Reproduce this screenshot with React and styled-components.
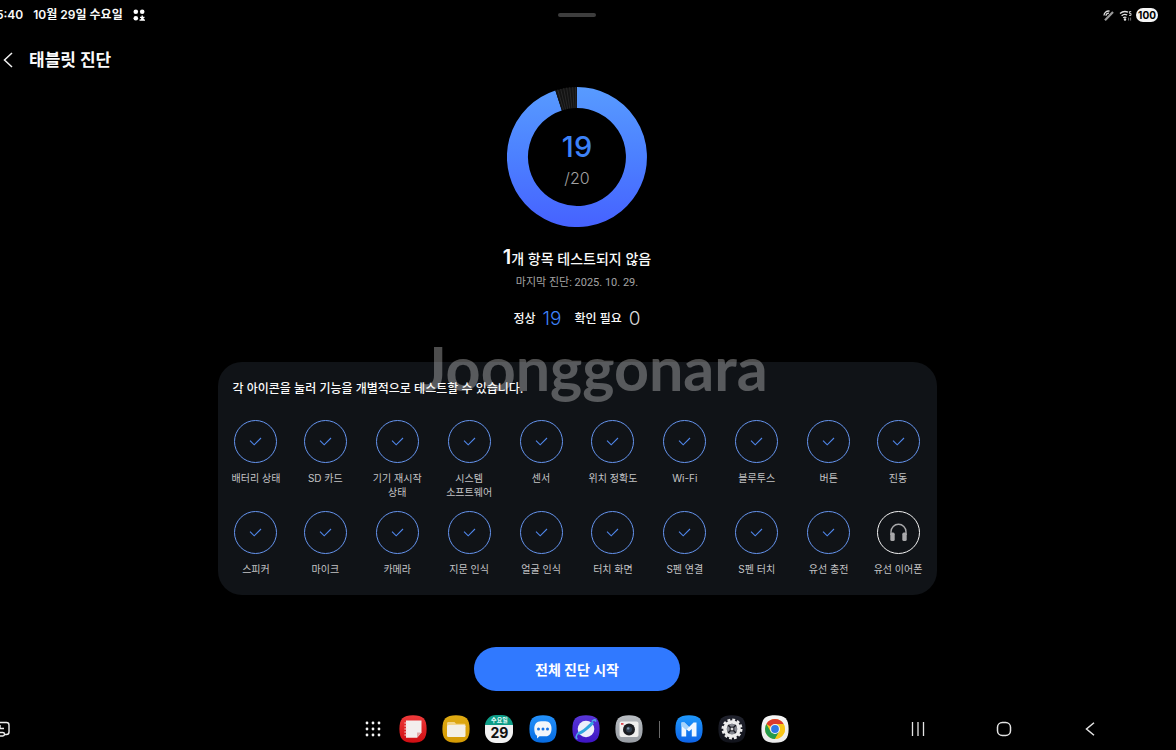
import styled, { createGlobalStyle } from "styled-components";

const GlobalStyle = createGlobalStyle`
  * {
    box-sizing: border-box;
  }
  body {
    margin: 0;
    background: #000;
    color: #fafafa;
    font-family: Inter, "Noto Sans CJK KR", sans-serif;
    overflow: hidden;
  }
  button {
    padding: 0;
    border: 0;
    background: none;
    color: inherit;
    font: inherit;
    cursor: pointer;
  }
  h1, h2, p, ul {
    margin: 0;
    padding: 0;
  }
  svg {
    display: block;
  }
`;

/* the tablet screen runs a little past the left edge of the window */
const Screen = styled.div`
  display: flex;
  flex-direction: column;
  min-height: 100vh;
  margin-left: -22px;
`;

const StatusBar = styled.div`
  display: grid;
  grid-template-columns: 1fr auto 1fr;
  align-items: center;
  height: 30px;
  padding: 0 18px;
  font-size: 12px;
  font-weight: 600;
  line-height: 16px;
`;

const StatusGroup = styled.div`
  display: flex;
  align-items: center;
  justify-content: ${(p) => (p.$end ? "flex-end" : "flex-start")};
  gap: ${(p) => (p.$end ? "4px" : "10px")};
`;

const Handle = styled.div`
  width: 38px;
  height: 4px;
  border-radius: 2px;
  background: #3d3d3d;
`;

const Battery = styled.span`
  border-radius: 7px;
  background: #f5f5f5;
  color: #000;
  font-size: 10px;
  font-weight: 700;
  line-height: 14px;
  width: 22px;
  text-align: center;
`;

const Header = styled.header`
  display: flex;
  align-items: center;
  gap: 15px;
  height: 57px;
  padding: 2px 24px 0;
`;

const Title = styled.h1`
  font-size: 17px;
  font-weight: 700;
  line-height: 24px;
`;

const Main = styled.main`
  display: flex;
  flex: 1;
  flex-direction: column;
  align-items: center;
`;

const RingBox = styled.div`
  display: grid;
  width: 140px;
  height: 140px;

  > * {
    grid-area: 1 / 1;
  }
`;

const RingText = styled.div`
  display: flex;
  flex-direction: column;
  align-items: center;
  padding-top: 44px;
`;

const Passed = styled.strong`
  color: #3d82f8;
  font-size: 29px;
  font-weight: 500;
  line-height: 32px;
`;

const Total = styled.span`
  color: #a0a0a0;
  font-size: 16px;
  font-weight: 300;
  line-height: 30px;
`;

const Summary = styled.h2`
  margin-top: 17px;
  font-size: 14px;
  font-weight: 500;
  line-height: 26px;

  b {
    font-size: 20px;
    font-weight: 600;
  }
`;

const LastRun = styled.p`
  margin-top: 3px;
  color: #a3a3a3;
  font-family: Roboto, "Noto Sans CJK KR", sans-serif;
  font-size: 11px;
  line-height: 16px;
`;

const Counts = styled.div`
  display: flex;
  align-items: center;
  gap: 13px;
  margin-top: 16px;
  font-size: 12px;
  font-weight: 500;
  line-height: 24px;
`;

const Count = styled.span`
  display: flex;
  align-items: center;
  gap: 7px;

  b {
    color: ${(p) => p.$color};
    font-size: 19px;
    font-weight: 300;
  }
`;

const Card = styled.section`
  width: 100%;
  max-width: 719px;
  margin-top: 31px;
  padding: 19px 5px;
  border-radius: 24px;
  background: #101317;
`;

const CardText = styled.p`
  margin: 0 10px 23px;
  font-size: 12px;
  font-weight: 500;
  line-height: 16px;
`;

const TestGrid = styled.ul`
  display: grid;
  grid-template-columns: 67fr repeat(8, 72fr) 67fr;
  row-gap: 12px;
  list-style: none;
`;

const TestItem = styled.li`
  display: flex;
  justify-content: center;
`;

const TestButton = styled.button`
  display: flex;
  flex-direction: column;
  align-items: center;
  gap: 8px;
  color: #c4c4c6;
  font-size: 10px;
  line-height: 14px;
  white-space: pre;
`;

const Circle = styled.span`
  display: grid;
  place-items: center;
  width: 43px;
  height: 43px;
  border: 1px solid ${(p) => (p.$done ? "#6594ee" : "#f2f2f2")};
  border-radius: 50%;
`;

const StartButton = styled.button`
  width: 206px;
  height: 44px;
  margin-top: 52px;
  border-radius: 22px;
  background: #3079ff;
  color: #fff;
  font-size: 14px;
  font-weight: 700;
`;

const Taskbar = styled.nav`
  display: grid;
  grid-template-columns: 1fr 431px 1fr;
  align-items: center;
  height: 42px;
`;

const Dock = styled.div`
  display: flex;
  align-items: center;
  justify-content: space-between;
  padding-right: 3px;
`;

const Divider = styled.span`
  width: 1px;
  height: 17px;
  background: #6a6a6a;
`;

const AppButton = styled.button`
  width: ${(p) => p.$width || "28px"};
  display: grid;
  place-items: center;
`;

const NavKeys = styled.div`
  display: flex;
  justify-content: flex-end;
  padding-right: 43px;
`;

const NavKey = styled.button`
  display: grid;
  place-items: center;
  width: 86px;
  height: 28px;
`;

const EdgeKey = styled.button`
  justify-self: start;
  margin-left: 14px;
`;

const CalendarTile = styled.span`
  display: flex;
  flex-direction: column;
  align-items: center;
  width: 28px;
  height: 28px;
  border-radius: 11px;
  overflow: hidden;
  background: linear-gradient(#0d9d87 10px, #f2f2f2 10px);
  color: #111;
  font-size: 14px;
  font-weight: 700;
  line-height: 16px;

  small {
    color: #e9fffa;
    font-size: 6px;
    line-height: 10px;
  }
`;

const Watermark = styled.div`
  position: fixed;
  inset: 0;
  display: grid;
  place-items: center;
  padding: 0 0 14px 12px;
  color: rgba(255, 255, 255, 0.3);
  font-family: Lato, sans-serif;
  font-size: 61px;
  font-weight: 700;
  line-height: 72px;
  pointer-events: none;
`;

const tests = [
  "배터리 상태",
  "SD 카드",
  "기기 재시작\n상태",
  "시스템\n소프트웨어",
  "센서",
  "위치 정확도",
  "Wi-Fi",
  "블루투스",
  "버튼",
  "진동",
  "스피커",
  "마이크",
  "카메라",
  "지문 인식",
  "얼굴 인식",
  "터치 화면",
  "S펜 연결",
  "S펜 터치",
  "유선 충전",
  "유선 이어폰",
];

function Check() {
  return (
    <svg width="13" height="9" viewBox="0 0 13 9" fill="none" stroke="#4f86ea" strokeWidth="1.1">
      <path d="M1 3.6 5.2 7.8 12 1" />
    </svg>
  );
}

function Headphones() {
  return (
    <svg width="19" height="19" viewBox="0 0 19 19" fill="none">
      <path d="M2 12V8.8a7.5 7.5 0 0 1 15 0V12" stroke="#a9a9ab" strokeWidth="1.4" />
      <rect x="1.3" y="9.6" width="4.4" height="8.4" rx="1.6" fill="#a9a9ab" />
      <rect x="13.3" y="9.6" width="4.4" height="8.4" rx="1.6" fill="#a9a9ab" />
    </svg>
  );
}

function Ring() {
  const ticks = [-16, -13.5, -11, -8.5, -6, -3.5, -1.2];
  return (
    <svg width="140" height="140" viewBox="0 0 140 140" fill="none">
      <defs>
        <linearGradient id="ring" gradientUnits="userSpaceOnUse" x1="0" y1="0" x2="0" y2="140">
          <stop offset="0" stopColor="#589bff" />
          <stop offset="0.5" stopColor="#4c80ff" />
          <stop offset="1" stopColor="#4662ff" />
        </linearGradient>
      </defs>
      <path d="M70 10.5A59.5 59.5 0 1 1 51.6 13.4" stroke="url(#ring)" strokeWidth="21" />
      <path d="M51.6 13.4A59.5 59.5 0 0 1 70 10.5" stroke="#131313" strokeWidth="21" />
      {ticks.map((a) => (
        <path key={a} d="M70 0V21" stroke="#2b2b2b" strokeWidth="0.8" transform={`rotate(${a} 70 70)`} />
      ))}
    </svg>
  );
}

function Tile({ id, from, to, children }) {
  return (
    <svg width="28" height="28" viewBox="0 0 28 28">
      <defs>
        <linearGradient id={id} x1="0" y1="0" x2="0" y2="1">
          <stop offset="0" stopColor={from} />
          <stop offset="1" stopColor={to} />
        </linearGradient>
      </defs>
      <path
        d="M14 .3C24 .3 27.6 4 27.6 14S24 27.7 14 27.7.4 24 .4 14 4 .3 14 .3Z"
        fill={`url(#${id})`}
      />
      {children}
    </svg>
  );
}

function StatusIcons() {
  return (
    <>
      <svg width="13" height="13" viewBox="0 0 13 13" fill="none" stroke="#ddd">
        <path d="M2 6.5a4.600 4.600 0 0 1 5.600-4.400M4 6.800a2.700 2.700 0 0 1 3-2.600" strokeWidth="1.3" />
        <path d="M3 11.200 11 3" stroke="#999" strokeWidth="2.2" />
      </svg>
      <svg width="13" height="13" viewBox="0 0 13 13" fill="none" stroke="#e4e4e4" strokeWidth="1.3">
        <path d="M1 4.600a7.500 7.500 0 0 1 8-1.400M2.600 6.800a5 5 0 0 1 5.600-.8M4.200 8.800a2.800 2.800 0 0 1 3.200-.3" />
        <circle cx="6" cy="10.4" r=".6" fill="#ddd" />
        <path d="M12.200 2.600h-1.800v1.800h1.600v2H10" strokeWidth=".9" />
        <path d="M9.600 8.600v3M11.600 8.600v3" stroke="#777" strokeWidth=".9" />
      </svg>
    </>
  );
}

function App() {
  return (
    <>
      <GlobalStyle />
      <Screen>
        <StatusBar>
          <StatusGroup>
            <span>5:40</span>
            <span>10월 29일 수요일</span>
            <svg width="12" height="12" viewBox="0 0 12 12" fill="#fff">
              <circle cx="2.8" cy="2.8" r="2.3" />
              <circle cx="9.2" cy="2.8" r="2.3" />
              <circle cx="2.8" cy="9.2" r="2.3" />
              <path d="M8.5 6.5h1.4v1.2h1.6v1.2h-1.1l.8 1.7H12v1.2H6.5v-1.2h1l.8-1.7H7V7.700h1.500z" />
            </svg>
          </StatusGroup>
          <Handle />
          <StatusGroup $end>
            <StatusIcons />
            <Battery>100</Battery>
          </StatusGroup>
        </StatusBar>

        <Header>
          <button aria-label="뒤로">
            <svg width="12" height="16" viewBox="0 0 12 16" fill="none" stroke="#f2f2f2" strokeWidth="1.5">
              <path d="M10 1 2.5 8 10 15" />
            </svg>
          </button>
          <Title>태블릿 진단</Title>
        </Header>

        <Main>
          <RingBox>
            <Ring />
            <RingText>
              <Passed>19</Passed>
              <Total>/20</Total>
            </RingText>
          </RingBox>

          <Summary>
            <b>1</b>개 항목 테스트되지 않음
          </Summary>
          <LastRun>마지막 진단: 2025. 10. 29.</LastRun>
          <Counts>
            <Count $color="#3f83f8">
              정상 <b>19</b>
            </Count>
            <Count $color="#d8d8d8">
              확인 필요 <b>0</b>
            </Count>
          </Counts>

          <Card>
            <CardText>각 아이콘을 눌러 기능을 개별적으로 테스트할 수 있습니다.</CardText>
            <TestGrid>
              {tests.map((name) => {
                const done = name !== "유선 이어폰";
                return (
                  <TestItem key={name}>
                    <TestButton>
                      <Circle $done={done}>{done ? <Check /> : <Headphones />}</Circle>
                      <span>{name}</span>
                    </TestButton>
                  </TestItem>
                );
              })}
            </TestGrid>
          </Card>

          <StartButton>전체 진단 시작</StartButton>
        </Main>

        <Taskbar>
          <EdgeKey aria-label="화면 캡처">
            <svg width="18" height="18" viewBox="0 0 18 18" fill="none" stroke="#eee" strokeWidth="1.4">
              <path d="M2 5a2.5 2.5 0 0 1 2.5-2.5h10A2.5 2.5 0 0 1 17 5v7a2.5 2.5 0 0 1-2.5 2.5H13" />
              <path d="M8 5v3.5h4" />
              <rect x="3" y="12.5" width="9.5" height="3.5" rx="1.7" />
            </svg>
          </EdgeKey>
          <Dock>
            <AppButton $width="22px" aria-label="앱스">
              <svg width="16" height="16" viewBox="0 0 16 16" fill="#f4f4f4">
                {[2, 8, 14].map((y) => [2, 8, 14].map((x) => <circle key={`${x}${y}`} cx={x} cy={y} r="1.4" />))}
              </svg>
            </AppButton>
            <AppButton aria-label="노트">
              <Tile id="notes" from="#ee3a3a" to="#cf0d12">
                <path d="M7 5.5h15.500v12L18 22.800H7z" fill="#f3eeee" />
                <path d="M22.5 17.5H18v5.300z" fill="#e3a9a9" />
                <path d="M5.4 8h3M5.4 11h3M5.4 14h3M5.4 17h3M5.4 20h3" stroke="#f7dada" strokeWidth="1.2" />
              </Tile>
            </AppButton>
            <AppButton aria-label="내 파일">
              <Tile id="files" from="#dfaa12" to="#d49a04">
                <path d="M5 8.5C5 7.5 5.5 7 6.5 7h6l1.5 1.8h8c1 0 1.500.5 1.500 1.500V12H5z" fill="#f3d588" />
                <rect x="5" y="10" width="18.5" height="12" rx="1.5" fill="#f3efe5" />
              </Tile>
            </AppButton>
            <AppButton aria-label="캘린더">
              <CalendarTile>
                <small>수요일</small>
                29
              </CalendarTile>
            </AppButton>
            <AppButton aria-label="메시지">
              <Tile id="messages" from="#2391fb" to="#076be0">
                <path
                  d="M12 6.300h4.500c4 0 6 3 6 7.400s-2 7.600-6 7.600h-6L8 23.400v-2.600c-1.900-1.200-2.700-3.700-2.700-7.100 0-4.400 2.200-7.400 6.700-7.400Z"
                  fill="#f3f6fa"
                />
                <circle cx="9.5" cy="14" r="1.5" fill="#1473e6" />
                <circle cx="14" cy="14" r="1.5" fill="#1473e6" />
                <circle cx="18.5" cy="14" r="1.5" fill="#1473e6" />
              </Tile>
            </AppButton>
            <AppButton aria-label="인터넷">
              <Tile id="internet" from="#5937d8" to="#3e14c4">
                <circle cx="14" cy="14" r="8.3" fill="#eeeefa" />
                <path d="M6.500 18.500C10.500 17.500 19.500 9.500 20.800 7.200" stroke="#31a5de" strokeWidth="3" fill="none" />
                <path
                  d="M6.800 17.200C3.800 20.500 3.200 23.500 5.600 23.600M20 6.300c2.200-2 4.200-1.900 3.400.4"
                  stroke="#4fa9ea"
                  strokeWidth="1.6"
                  fill="none"
                />
              </Tile>
            </AppButton>
            <AppButton aria-label="카메라">
              <Tile id="camera" from="#b9bdc2" to="#979ca3">
                <rect x="4.5" y="6.5" width="19" height="15.5" rx="2" fill="#f0f0f0" />
                <circle cx="14" cy="14.5" r="6" fill="#191b20" />
                <circle cx="14" cy="14.5" r="3" fill="#303d4d" />
                <circle cx="13.2" cy="13.4" r="1.2" fill="#8297ad" />
                <rect x="6" y="8" width="2.5" height="1.8" fill="#dc4850" />
              </Tile>
            </AppButton>
            <Divider />
            <AppButton aria-label="멤버스">
              <Tile id="members" from="#2099fc" to="#0d63e7">
                <path d="M6.500 7.500h3L14 12l4.500-4.500h3v14h-4.700V14L14 16.500 11.200 14v7.500H6.500z" fill="#f1f7ff" />
                <path d="M6.500 7.500h3L14 12l-2.800 3-4.700-4z" fill="#a6d3fb" />
              </Tile>
            </AppButton>
            <AppButton aria-label="설정">
              <Tile id="settings" from="#20222d" to="#11131b">
                <circle cx="14" cy="14" r="9.3" stroke="#ececec" strokeWidth="2.4" strokeDasharray="2.8 2.07" fill="none" />
                <circle cx="14" cy="14" r="7" fill="none" stroke="#ececec" strokeWidth="3.6" />
                <circle cx="14" cy="14" r="5.2" fill="#858890" />
                <path d="m10 10 8 8M18 10l-8 8" stroke="#17181f" strokeWidth="1.5" />
                <circle cx="14" cy="14" r="2" fill="#ddd" stroke="#17181f" />
              </Tile>
            </AppButton>
            <AppButton aria-label="크롬">
              <Tile id="chrome" from="#f6f6f6" to="#ebebeb">
                <circle cx="14" cy="14" r="10" fill="#f8c518" />
                <path d="M14 14 5.340 9A10 10 0 0 1 22.660 9z" fill="#dc3a2d" />
                <path d="M5.340 9A10 10 0 0 0 14 24l4.330-7.500L14 14 9.670 16.500z" fill="#249a4c" />
                <path d="M14 9h8.660A10 10 0 0 1 14 24l4.330-7.500z" fill="#f8c518" />
                <circle cx="14" cy="14" r="5" fill="#f6f6f6" />
                <circle cx="14" cy="14" r="3.900" fill="#2f78e8" />
              </Tile>
            </AppButton>
          </Dock>
          <NavKeys>
            <NavKey aria-label="최근 앱">
              <svg width="14" height="14" viewBox="0 0 14 14" stroke="#e4e4e4" strokeWidth="1.3">
                <path d="M1.5 0v14M7 0v14M12.5 0v14" />
              </svg>
            </NavKey>
            <NavKey aria-label="홈">
              <svg width="16" height="16" viewBox="0 0 16 16" fill="none" stroke="#e4e4e4" strokeWidth="1.5">
                <rect x="1.5" y="1.5" width="13" height="13" rx="4.8" />
              </svg>
            </NavKey>
            <NavKey aria-label="이전">
              <svg width="10" height="14" viewBox="0 0 10 14" fill="none" stroke="#e4e4e4" strokeWidth="1.5">
                <path d="M9 .7 1.5 7 9 13.3" />
              </svg>
            </NavKey>
          </NavKeys>
        </Taskbar>
      </Screen>
      <Watermark aria-hidden="true">Joonggonara</Watermark>
    </>
  );
}

export default App;
